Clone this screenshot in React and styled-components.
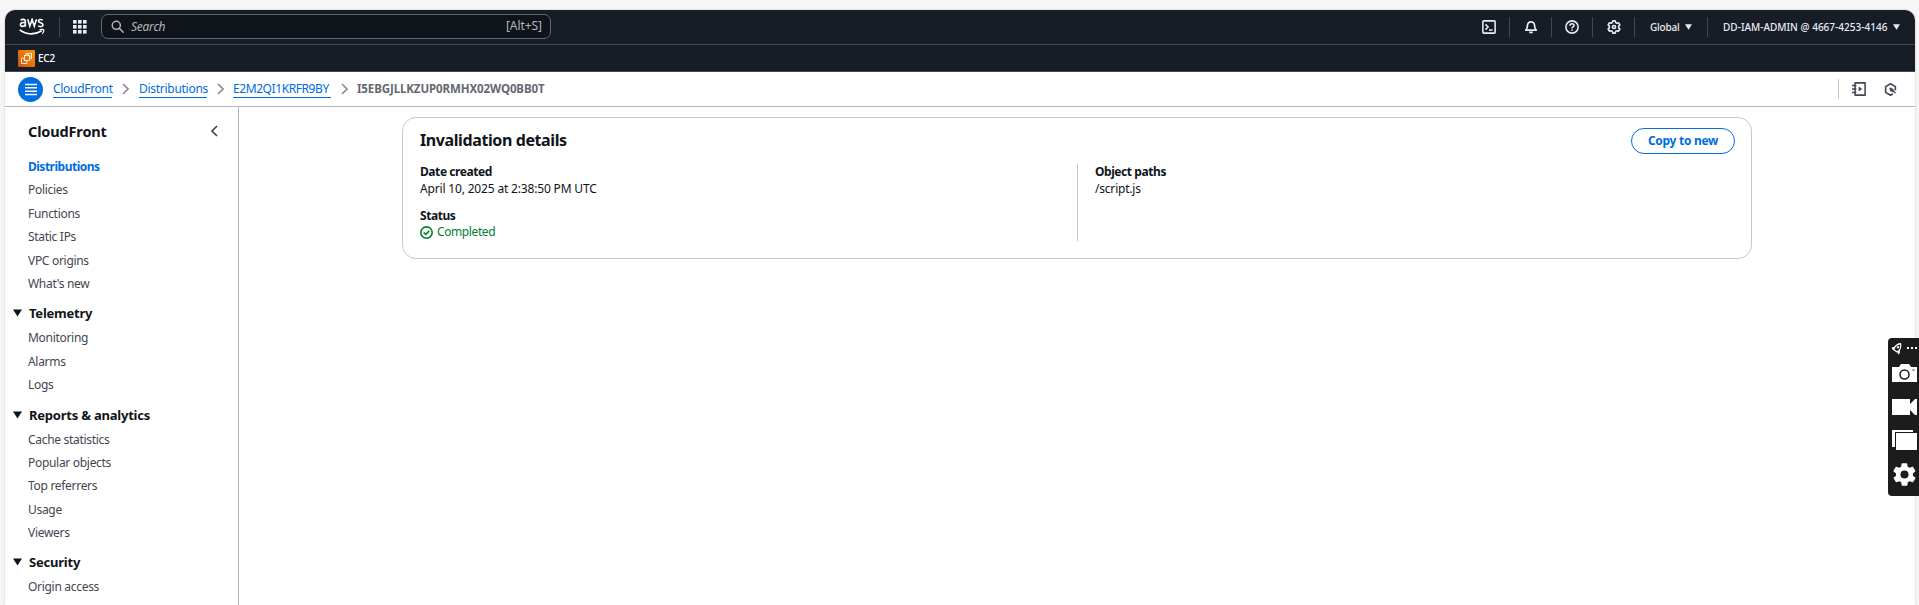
import React from 'react';
import styled, { createGlobalStyle } from 'styled-components';

const Global = createGlobalStyle`
  * { box-sizing: border-box; }
  html, body { margin: 0; background: #f6f6f6; overflow: hidden; }
  body { font-family: "Noto Sans", "Open Sans", sans-serif; font-size: 12px; color: #0f141a; }
  svg { display: block; flex: none; }
`;

const Page = styled.div`
  height: 605px; padding: 10px 4px 0 5px; overflow: hidden;
`;
const Window = styled.div`
  height: 595px; background: #fff; border-radius: 10px 10px 0 0; overflow: hidden;
  box-shadow: 0 0 2px rgba(0, 0, 0, 0.25); display: flex; flex-direction: column;
`;
const TopBar = styled.header`
  height: 35px; flex: none; background: #161d26; border-bottom: 1px solid #424650;
  display: flex; align-items: center; color: #ebebf0; padding-left: 14px;
`;
const Divider = styled.span`
  width: 1px; height: 20px; flex: none; background: ${(p) => p.$c || '#424650'};
`;
const LogoBox = styled.div`width: 40px;`;
const AppsBox = styled.div`padding: 0 14px 0 13px;`;
const SearchBox = styled.div`
  width: 450px; height: 25px; border: 1px solid #656871; border-radius: 7px; background: #0f141a;
  display: flex; align-items: center; padding: 0 8px 0 9px; color: #b4b4bb; margin-top: -1px;
`;
const SearchHint = styled.span`
  flex: 1; padding-left: 7px; font-style: italic; letter-spacing: -0.25px; line-height: 16px;
`;
const Shortcut = styled.span`letter-spacing: -0.05px; line-height: 16px; margin-top: -2px;`;
const Tools = styled.div`margin-left: auto; display: flex; align-items: center;`;
const Tool = styled.div`width: ${(p) => p.$w || 41}px; display: flex; justify-content: center;`;
const TopLabel = styled.div`
  width: ${(p) => p.$w}px; display: flex; align-items: center; justify-content: space-between;
  margin: 0 15px; font-size: 10px; font-weight: 500; letter-spacing: ${(p) => p.$ls}px;
  line-height: 14px; white-space: nowrap;
`;
const FavBar = styled.div`
  height: 27px; flex: none; background: #161d26; border-bottom: 1px solid #424650; display: flex;
  align-items: center; gap: 3px; padding: 0 0 0 13px; color: #fff; font-size: 10px; font-weight: 500;
  letter-spacing: -0.2px; line-height: 14px;
`;
const FavLabel = styled.span`padding-bottom: 1px;`;
const CrumbBar = styled.nav`
  height: 35px; flex: none; border-bottom: 1px solid #b4b4bb; display: flex; align-items: center;
  padding: 0 18px 0 13px;
`;
const MenuButton = styled.button`
  width: 25px; height: 25px; margin: 0 10px 0 0; padding: 0; border: 0; border-radius: 50%; background: #006ce0;
  display: grid; place-items: center;
`;
const Crumb = styled.a`
  color: #006ce0; border-bottom: 1px solid #006ce0; line-height: 16px; height: 17px; width: ${(p) => p.$w}px;
  letter-spacing: ${(p) => p.$ls}px; white-space: nowrap;
`;
const Current = styled.span`
  color: #656871; font-weight: 700; font-size: 11.5px; letter-spacing: -0.1px; line-height: 16px; white-space: nowrap;
`;
const Sep = styled.span`width: ${(p) => p.$w || 27}px; display: grid; place-items: center;`;
const CrumbTools = styled.div`margin-left: auto; display: flex; align-items: center;`;
const CrumbIcon = styled.span`margin-left: ${(p) => p.$ml}px;`;
const Body = styled.div`flex: 1; display: flex; min-height: 0;`;
const Sidebar = styled.aside`
  width: 234px; flex: none; border-right: 1px solid #b4b4bb; padding: 12px 0 0 23px; overflow: hidden;
`;
const SideHead = styled.div`
  display: flex; justify-content: space-between; align-items: center; padding-right: 20px; height: 24px;
`;
const SideTitle = styled.h2`margin: 0; font-size: 14.5px; line-height: 22px; letter-spacing: -0.15px;`;
const Links = styled.div`padding-top: ${(p) => p.$top || 0}px;`;
const SideLink = styled.a`
  display: block; height: 23.4px; line-height: 23.4px; white-space: nowrap;
  color: ${(p) => (p.$active ? '#006ce0' : '#424650')}; font-weight: ${(p) => (p.$active ? 700 : 400)};
  letter-spacing: ${(p) => (p.$active ? -0.5 : -0.3)}px;
`;
const Group = styled.div`
  display: flex; align-items: center; gap: 7px; height: 24px; margin: 6px 0 1px -15px;
  font-size: 13px; font-weight: 700; letter-spacing: -0.22px;
`;
const Main = styled.main`flex: 1; padding: 10px 0 0 163px;`;
const Card = styled.section`
  width: 1350px; height: 142px; border: 1px solid #c6c6cd; border-radius: 14px; padding: 10px 16px 0 17px;
`;
const CardHead = styled.div`display: flex; justify-content: space-between; align-items: flex-start; height: 36px;`;
const CardTitle = styled.h1`margin: 0; font-size: 16px; line-height: 25px; letter-spacing: -0.4px;`;
const Button = styled.button`
  width: 104px; height: 26px; border: 1px solid #006ce0; border-radius: 13px; background: #fff; padding: 0 0 1px;
  font: 700 12px "Noto Sans", sans-serif; color: #006ce0; letter-spacing: -0.3px;
`;
const Columns = styled.div`display: flex; height: 77px;`;
const Column = styled.div`
  width: ${(p) => p.$w}px; border-left: ${(p) => (p.$line ? '1px solid #c6c6cd' : '0')};
  padding-left: ${(p) => (p.$line ? 17 : 0)}px;
`;
const Field = styled.div`height: 44px;`;
const Label = styled.div`font-weight: 700; line-height: 16px; letter-spacing: -0.43px;`;
const Value = styled.div`
  display: flex; align-items: center; gap: 4px; line-height: ${(p) => (p.$ok ? 16 : 17)}px;
  letter-spacing: ${(p) => p.$ls ?? -0.2}px; color: ${(p) => (p.$ok ? '#00802f' : '#0f141a')};
`;
const Recorder = styled.div`
  position: absolute; left: 1888px; top: 338px; width: 31px; height: 158px; background: #1c1c1c;
  border-radius: 4px 0 0 4px; padding: 4px 0 0 4px;
`;

const Stroke = ({ s = 14, c = 'currentColor', w = 2, children }) => (
  <svg width={s} height={s} viewBox="0 0 16 16" fill="none" stroke={c} strokeWidth={w} strokeLinejoin="round">{children}</svg>
);
const Caret = ({ w = 7, h = 6 }) => (
  <svg width={w} height={h} viewBox="0 0 10 8" fill="currentColor"><path d="M0 0h10L5 8z" /></svg>
);
const AwsLogo = () => (
  <svg width="26" height="18" viewBox="0 0 26 18" fill="none" stroke="#fff">
    <g strokeWidth="1.6">
      <path d="M1.6 2.200C3.200 1 6.300 .8 6.300 3.200V8.700M6.300 4.700C3.800 4.300 1.400 4.700 1.400 6.600 1.400 9.200 5.300 8.600 6.300 6.700" />
      <path d="M8.700 1.200l2.100 7 2.300-6.800 2.200 6.800 2.200-7" />
      <path d="M23.700 2C21.700 1 19.500 1.400 19.500 3c0 2.100 4.500 1.400 4.500 3.800 0 2-2.800 2.300-4.900 1.100" />
    </g>
    <path d="M.7 11.900c6.700 5 15.200 5.200 22 .8" strokeWidth="1.700" />
    <path d="M20.500 11.800c1.600-.5 3.600-.6 4.300 0 .2 1.200-.6 2.900-1.500 4" strokeWidth="1.200" />
  </svg>
);
const Grid = () => (
  <svg width="14" height="14" fill="#ebebf0">
    {[0, 5, 10].map((y) => [0, 5, 10].map((x) => <rect key={`${x}-${y}`} x={x} y={y} width="3.6" height="3.6" />))}
  </svg>
);
const Ec2 = () => (
  <svg width="17" height="17" viewBox="0 0 17 17" fill="none" stroke="#fff" strokeWidth="0.8">
    <defs><linearGradient id="ec2" x1="0" y1="1" x2="1" y2="0"><stop stopColor="#c8511b" /><stop offset="1" stopColor="#f90" /></linearGradient></defs>
    <rect width="17" height="17" rx="1" fill="url(#ec2)" stroke="none" />
    <rect x="6.500" y="5.500" width="5" height="5" />
    <path d="M8 4.500V3.500h5.500V9H12.500M5.500 8H3.500v5.500H9V11.500M8 5.500V4M10 5.500V4M11.500 7H13M6.500 9H5M8 10.500V12" />
  </svg>
);
const Chevron = () => (
  <svg width="7" height="12" viewBox="0 0 7 12" fill="none" stroke="#8c8c94" strokeWidth="1.7"><path d="M1 1l5 5-5 5" /></svg>
);
const Gear = ({ s, fill, hole, ...rest }) => (
  <svg width={s} height={s} viewBox="0 0 24 24" {...rest}>
    <path fill={fill} d="M19.4 13c.04-.3.06-.7.06-1s-.02-.7-.06-1l2.1-1.6c.2-.2.25-.4.1-.7l-2-3.4c-.1-.2-.4-.3-.6-.2l-2.5 1c-.5-.4-1.1-.7-1.7-1l-.4-2.6c0-.3-.2-.5-.5-.5h-4c-.3 0-.5.2-.5.5L9 5.1c-.6.3-1.2.6-1.7 1l-2.5-1c-.2-.1-.5 0-.6.2l-2 3.400c-.1.2-.1.5.1.7L4.500 11c-.04.3-.06.7-.06 1s.02.7.06 1l-2.100 1.600c-.2.2-.25.4-.1.7l2 3.400c.1.2.4.3.6.2l2.500-1c.5.4 1.100.7 1.700 1l.4 2.600c0 .3.2.5.5.5h4c.3 0 .5-.2.5-.5l.4-2.600c.6-.3 1.200-.6 1.700-1l2.500 1c.2.1.5 0 .6-.2l2-3.400c.1-.2.1-.5-.1-.7z" />
    <circle cx="12" cy="12" r="3.600" fill={hole} />
  </svg>
);
const Settings = () => (
  <Stroke w={1.800}><path d="M6.600 1h2.800l.5 1.900 1.500.9 1.900-.6L14.700 5.600 13.300 7v2l1.400 1.400-1.400 2.400-1.900-.6-1.500.9L9.400 15H6.600l-.5-1.900-1.500-.9-1.900.6L1.300 10.400 2.700 9V7L1.300 5.600l1.400-2.400 1.900.6 1.500-.9z" /><circle cx="8" cy="8" r="1.800" /></Stroke>
);

const sections = [
  { items: ['Policies', 'Functions', 'Static IPs', 'VPC origins', "What's new"] },
  { title: 'Telemetry', items: ['Monitoring', 'Alarms', 'Logs'] },
  { title: 'Reports & analytics', items: ['Cache statistics', 'Popular objects', 'Top referrers', 'Usage', 'Viewers'] },
  { title: 'Security', items: ['Origin access'] },
];

export default function App() {
  return (
    <Page>
      <Global />
      <Window>
        <TopBar>
          <LogoBox><AwsLogo /></LogoBox>
          <Divider />
          <AppsBox><Grid /></AppsBox>
          <SearchBox>
            <Stroke s={13} w={1.8}><circle cx="6.500" cy="6.500" r="5" /><path d="M10 10l5.500 5.500" /></Stroke>
            <SearchHint>Search</SearchHint>
            <Shortcut>[Alt+S]</Shortcut>
          </SearchBox>
          <Tools>
            <Tool><Stroke w={1.800}><rect x="1" y="1" width="14" height="14" rx="1" /><path d="M4 5l3 3-3 3M8 11.500h4" /></Stroke></Tool>
            <Divider />
            <Tool><Stroke><path d="M2 11.500c1.500-1.500 2-3 2-5.500a4 4 0 018 0c0 2.500.5 4 2 5.500z" /><path d="M6 14.200h4" /></Stroke></Tool>
            <Divider />
            <Tool $w={40}><Stroke w={1.800}><circle cx="8" cy="8" r="7" /><path d="M5.700 6.500C5.700 3.500 10.500 3.700 10.300 6.300 10.200 7.800 8 7.800 8 9.600M8 10.800v1.600" /></Stroke></Tool>
            <Divider />
            <Tool><Settings /></Tool>
            <Divider />
            <TopLabel $w={42} $ls={-0.200}><span>Global</span><Caret /></TopLabel>
            <Divider />
            <TopLabel $w={177} $ls={0.02}><span>DD-IAM-ADMIN @ 4667-4253-4146</span><Caret /></TopLabel>
          </Tools>
        </TopBar>
        <FavBar><Ec2 /><FavLabel>EC2</FavLabel></FavBar>
        <CrumbBar>
          <MenuButton aria-label="Menu">
            <svg width="12" height="13" stroke="#fff" strokeWidth="1.500"><path d="M0 1.500h12M0 4.800h12M0 8.200h12M0 11.500h12" /></svg>
          </MenuButton>
          <Crumb $w={59} $ls={-0.300}>CloudFront</Crumb><Sep><Chevron /></Sep>
          <Crumb $w={68} $ls={-0.280}>Distributions</Crumb><Sep $w={26}><Chevron /></Sep>
          <Crumb $w={98} $ls={-0.420}>E2M2QI1KRFR9BY</Crumb><Sep $w={26}><Chevron /></Sep>
          <Current>I5EBGJLLKZUP0RMHX02WQ0BB0T</Current>
          <CrumbTools>
            <Divider $c="#c6c6cd" />
            <CrumbIcon $ml={13}><Stroke c="#424650" w={1.800}><path d="M3.500 1H15v14H3.500zM0 4h5M0 8h5M0 12h5" /><path d="M8 6v4l3-2z" fill="#424650" strokeWidth="1" /></Stroke></CrumbIcon>
            <CrumbIcon $ml={18}><Stroke s={13} c="#424650"><path d="M14 9V4.500L8 1 2 4.500v7L8 15l3-1.700" /><path d="M7 6l3.500 1 4 5.500-4-2L8 10z" fill="#424650" strokeWidth="0.800" /></Stroke></CrumbIcon>
          </CrumbTools>
        </CrumbBar>
        <Body>
          <Sidebar>
            <SideHead>
              <SideTitle>CloudFront</SideTitle>
              <svg width="8" height="12" fill="none" stroke="#424650" strokeWidth="1.700"><path d="M7 1L2 6l5 5" /></svg>
            </SideHead>
            <Links $top={12}><SideLink $active>Distributions</SideLink></Links>
            {sections.map((s, i) => (
              <React.Fragment key={i}>
                {s.title && <Group><Caret w={9} h={8} />{s.title}</Group>}
                <Links>{s.items.map((t) => <SideLink key={t}>{t}</SideLink>)}</Links>
              </React.Fragment>
            ))}
          </Sidebar>
          <Main>
            <Card>
              <CardHead><CardTitle>Invalidation details</CardTitle><Button>Copy to new</Button></CardHead>
              <Columns>
                <Column $w={657}>
                  <Field><Label>Date created</Label><Value $ls={-0.170}>April 10, 2025 at 2:38:50 PM UTC</Value></Field>
                  <Field>
                    <Label>Status</Label>
                    <Value $ok $ls={-0.400}><Stroke s={13}><circle cx="8" cy="8" r="7" /><path d="M4.500 8l2.500 2.500 4.500-4.500" /></Stroke>Completed</Value>
                  </Field>
                </Column>
                <Column $w={600} $line><Label>Object paths</Label><Value>/script.js</Value></Column>
              </Columns>
            </Card>
          </Main>
        </Body>
      </Window>
      <Recorder>
        <svg width="27" height="150" viewBox="0 0 27 150" fill="#fff">
          <g transform="rotate(35 5.500 6)">
            <path d="M5.500 .8C8.500 3 8.500 7 7.500 9.500h-4C2.500 7 2.500 3 5.500 .8z" fill="none" stroke="#fff" strokeWidth="1.300" />
            <circle cx="5.500" cy="5" r="1.200" />
            <path d="M2.800 6L.8 8.500v2.500l2.500-1.500zM8.200 6l2 2.500v2.500L7.700 9.500z" />
          </g>
          <path d="M15 5h2v2h-2zM19 5h2v2h-2zM23 5h2v2h-2z" />
          <path d="M0 25h7l2-3h8l2 3h6v15H0z" /><path d="M20.500 27.500h2v1h-2z" fill="#1c1c1c" />
          <circle cx="12.500" cy="32.500" r="4.500" fill="none" stroke="#1c1c1c" strokeWidth="1.500" />
          <path d="M0 57h18v5l5-5h2v16h-2l-5-5v5H0z" />
          <path d="M0 88h21v2H3v15H0zM4 91h21v17H4z" />
          <Gear x="-1" y="119" s={27} fill="#fff" hole="#1c1c1c" />
        </svg>
      </Recorder>
    </Page>
  );
}
